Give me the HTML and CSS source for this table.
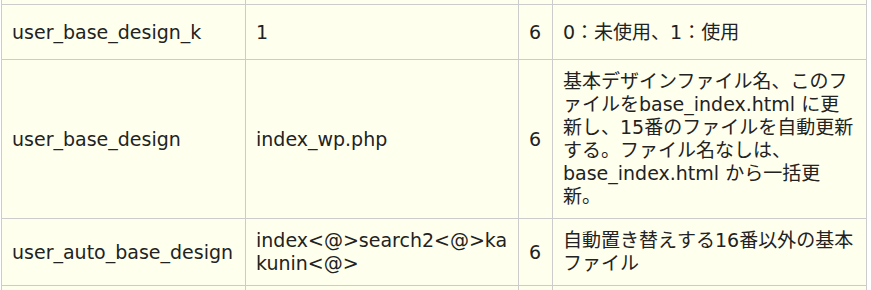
FILE: index.html
```html
<!DOCTYPE html>
<html lang="ja">
<head>
<meta charset="utf-8">
<title>設定</title>
<link rel="stylesheet" href="styles.css">
</head>
<body>
<table class="spec">
  <colgroup>
    <col class="c-name">
    <col class="c-value">
    <col class="c-len">
    <col class="c-desc">
  </colgroup>
  <tbody>
    <tr class="edge edge-top"><td></td><td></td><td></td><td></td></tr>
    <tr class="row-tall">
      <td>user_base_design_k</td>
      <td>1</td>
      <td>6</td>
      <td>0：未使用、1：使用</td>
    </tr>
    <tr>
      <td>user_base_design</td>
      <td>index_wp.php</td>
      <td>6</td>
      <td>基本デザインファイル名、このファイルをbase_index.html に更新し、15番のファイルを自動更新する。ファイル名なしは、base_index.html から一括更新。</td>
    </tr>
    <tr>
      <td>user_auto_base_design</td>
      <td class="breakall">index&lt;@&gt;search2&lt;@&gt;kakunin&lt;@&gt;</td>
      <td>6</td>
      <td>自動置き替えする16番以外の基本ファイル</td>
    </tr>
    <tr class="edge edge-bottom"><td></td><td></td><td></td><td></td></tr>
  </tbody>
</table>
</body>
</html>
```

FILE: styles.css
```css
html, body {
  margin: 0;
  padding: 0;
  background: #ffffff;
}

.spec {
  margin-left: 1px;
  width: 866px;
  border-collapse: collapse;
  table-layout: fixed;
  background: #ffffee;
  font-family: "DejaVu Sans", "Noto Sans CJK JP", sans-serif;
  font-size: 19px;
  line-height: 23px;
  color: #222222;
}

.c-name { width: 244px; }
.c-value { width: 273px; }
.c-len { width: 34px; }
.c-desc { width: 314px; }

.spec td {
  border: 1px solid #cccccc;
  padding: 10px;
  vertical-align: middle;
  text-align: left;
}

.spec .breakall {
  word-break: break-all;
}

.spec .row-tall td {
  height: 34px;
}

.spec .edge td {
  padding: 0;
}

.spec .edge-top td {
  border-top: none;
  height: 4px;
}

.spec .edge-bottom td {
  border-bottom: none;
  height: 10px;
}
```
